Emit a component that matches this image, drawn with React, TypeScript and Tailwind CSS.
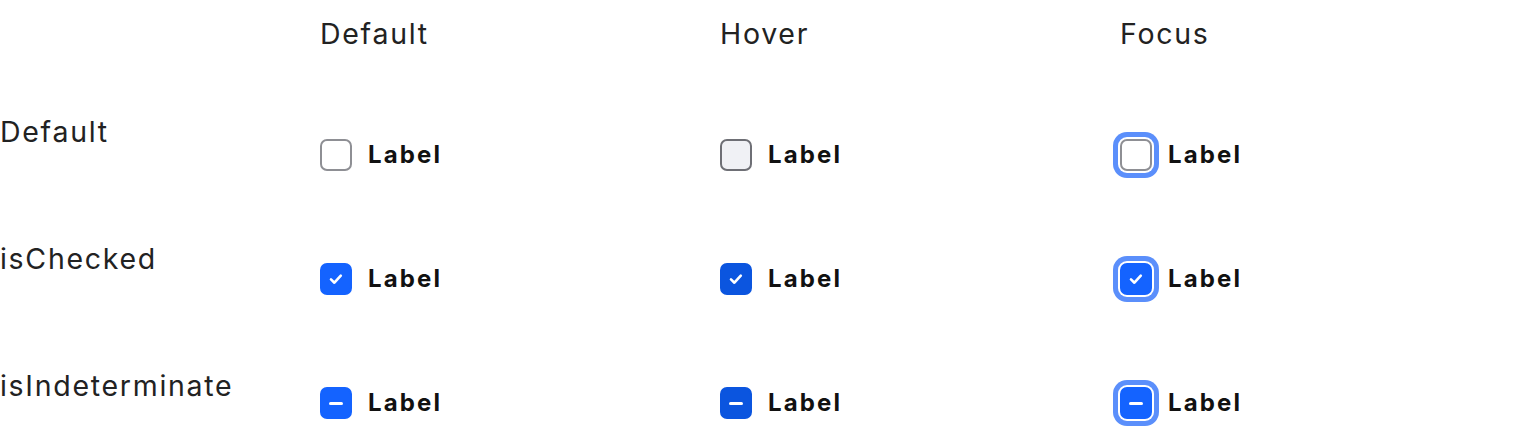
import React from "react";

type Kind = "unchecked" | "checked" | "indeterminate";
type State = "default" | "hover" | "focus";

const COLS: { label: string; state: State }[] = [
  { label: "Default", state: "default" },
  { label: "Hover", state: "hover" },
  { label: "Focus", state: "focus" },
];

const ROWS: { label: string; kind: Kind }[] = [
  { label: "Default", kind: "unchecked" },
  { label: "isChecked", kind: "checked" },
  { label: "isIndeterminate", kind: "indeterminate" },
];

function Box({ kind, state }: { kind: Kind; state: State }) {
  const filled = kind !== "unchecked";
  let cls = "";
  if (filled) {
    cls = state === "hover" ? "bg-[#0b55df] border-[#0b55df]" : "bg-[#1463ff] border-[#1463ff]";
  } else {
    cls = state === "hover" ? "bg-[#f0f1f5] border-[#6e6f75]" : "bg-white border-[#8e8f94]";
  }
  const ring =
    state === "focus" ? "shadow-[0_0_0_2px_#ffffff,0_0_0_7px_#5b8ffb]" : "";
  return (
    <span
      className={`grid size-8 shrink-0 place-items-center rounded-[7px] border-2 ${cls} ${ring}`}
    >
      {kind === "checked" && (
        <svg width="20" height="20" viewBox="0 0 20 20" fill="none">
          <path
            d="M5 10.4l3.4 3.3 6.4-7"
            stroke="white"
            strokeWidth="2.6"
            strokeLinecap="round"
            strokeLinejoin="round"
          />
        </svg>
      )}
      {kind === "indeterminate" && (
        <span className="block h-[3px] w-[14px] rounded-full bg-white" />
      )}
    </span>
  );
}

export default function App() {
  return (
    <div
      className="h-[432px] w-[1520px] overflow-hidden bg-white text-[#1c1c1e]"
      style={{ fontFamily: "Inter, 'Noto Sans', sans-serif" }}
    >
      <div className="grid grid-cols-[320px_400px_400px_400px]">
        <div />
        {COLS.map((c) => (
          <div
            key={c.label}
            className="pt-[14px] text-[28.5px] leading-[40px] tracking-[0.06em] text-[#222]"
          >
            {c.label}
          </div>
        ))}
      </div>

      <div className="mt-[58px] flex items-start">
        {/* row labels */}
        <div className="flex w-[320px] shrink-0 flex-col">
          {ROWS.map((r) => (
            <div
              key={r.label}
              className="h-[127px] text-[28.5px] leading-[40px] tracking-[0.06em] text-[#222]"
            >
              {r.label}
            </div>
          ))}
        </div>

        {/* checkbox matrix */}
        <div className="mt-[27px] grid grid-cols-[400px_400px_400px] grid-rows-[32px_32px_32px] gap-y-[92px]">
          {ROWS.map((r) =>
            COLS.map((c) => (
              <div key={r.label + c.label} className="flex h-8 items-center gap-4">
                <Box kind={r.kind} state={c.state} />
                <span className="text-[24px] font-bold leading-[32px] tracking-[0.09em] text-[#111]">
                  Label
                </span>
              </div>
            )),
          )}
        </div>
      </div>
    </div>
  );
}
